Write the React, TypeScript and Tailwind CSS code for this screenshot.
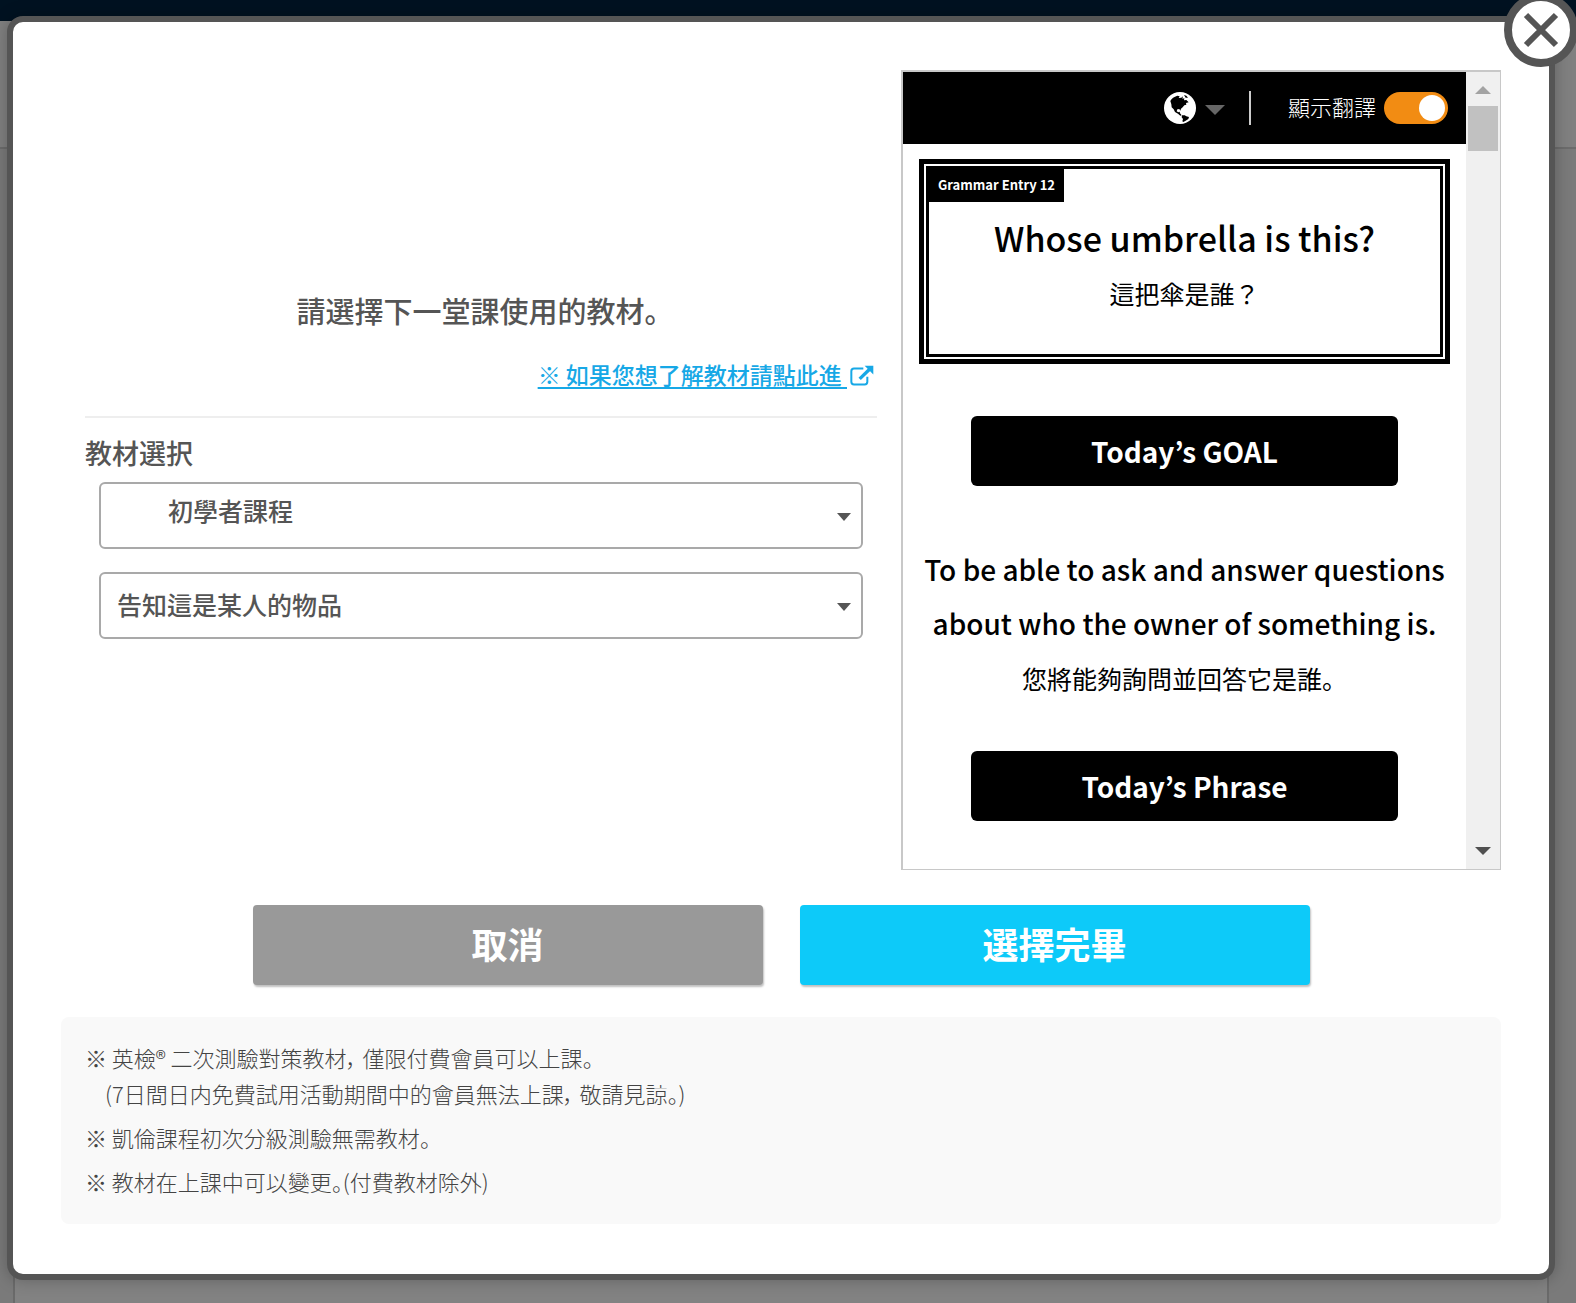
import type { ReactNode } from "react";

const NOTES = [
  ["※ 英檢® 二次測驗對策教材， 僅限付費會員可以上課。", "(7日間日内免費試用活動期間中的會員無法上課， 敬請見諒。)"],
  ["※ 凱倫課程初次分級測驗無需教材。"],
  ["※ 教材在上課中可以變更。(付費教材除外)"],
];

function GlobeIcon() {
  return (
    <svg viewBox="0 0 96 96" className="size-8" aria-hidden="true">
      <circle cx="48" cy="48" r="48" fill="#fff" />
      <path
        d="M19 27C23 19 30 14 40 11L47 13L44 18L52 17L57 13L55 20L61 19L60 25L67 24L74 31L66 33L67 38L61 40L56 46L51 50L49 56L46 51L40 52L38 58L43 61L47 59L48 64L53 70L49 71L42 65L33 60L29 52L23 46L22 37Z"
        fill="#000"
      />
      <path d="M54 70L62 70L67 73L75 75L73 81L65 86L58 90L55 88L57 81L53 76Z" fill="#000" />
      <path d="M60 9L67 11L72 17L65 17Z" fill="#000" />
    </svg>
  );
}

function ExternalIcon() {
  return (
    <svg viewBox="0 0 72 62" className="mt-1 h-[21px] w-6" fill="none" aria-hidden="true">
      <path
        d="M40 10H12Q4 10 4 18V50Q4 58 12 58H44Q52 58 52 50V35"
        stroke="currentColor"
        strokeWidth="6"
      />
      <path d="M29 41L58 13" stroke="currentColor" strokeWidth="10" />
      <path d="M44 2H70V28Z" fill="currentColor" />
    </svg>
  );
}

type TriangleProps = { className: string; up?: boolean };

function Triangle({ className, up = false }: TriangleProps) {
  return (
    <svg viewBox="0 0 16 8" preserveAspectRatio="none" className={className} aria-hidden="true">
      <path d={up ? "M0 8H16L8 0Z" : "M0 0H16L8 8Z"} fill="currentColor" />
    </svg>
  );
}

type SelectBoxProps = { label: string; value: string; className: string };

function SelectBox({ label, value, className }: SelectBoxProps) {
  return (
    <div className="relative">
      <select
        aria-label={label}
        className={`block h-[67px] w-full appearance-none rounded-md border-2 border-[#a9a9a9] bg-white text-[25px] font-medium text-[#555] ${className}`}
      >
        <option>{value}</option>
      </select>
      <Triangle className="pointer-events-none absolute top-[31px] right-3 h-2 w-[14px] text-[#555]" />
    </div>
  );
}

function Banner({ children }: { children: ReactNode }) {
  return (
    <h3 className="mx-auto flex h-[70px] w-[76%] items-center justify-center rounded-md bg-black text-[28px] font-bold text-white">
      {children}
    </h3>
  );
}

function Preview() {
  return (
    <section className="flex h-[800px] w-5/12 border border-t-2 border-l-2 border-[#c8c8c8] text-black">
      <div className="flex-1 overflow-hidden">
        <div className="flex h-[72px] items-center justify-end bg-black pr-[18px] text-white">
          <button type="button" aria-label="Language" className="flex items-center gap-[9px]">
            <GlobeIcon />
            <Triangle className="mt-1 h-[10px] w-5 text-[#666]" />
          </button>
          <span className="mr-[37px] ml-6 h-[34px] w-[2px] bg-[#ccc]" />
          <label className="flex items-center gap-2 text-[22px] leading-8 font-light">
            <span className="pb-1">顯示翻譯</span>
            <input type="checkbox" defaultChecked className="peer sr-only" />
            <span className="flex h-8 w-16 items-center justify-end rounded-full bg-[#f28c13] pr-[3px]">
              <span className="size-[26px] rounded-full bg-white" />
            </span>
          </label>
        </div>

        <div className="px-4 pt-[15px] text-center">
          <div className="border-[5px] border-black p-[2px]">
            <div className="relative h-[191px] border-[3px] border-black pt-[42px]">
              <span className="absolute top-0 left-0 bg-black px-[9px] pt-[6px] pb-[7px] text-[13px] leading-5 font-bold text-white">
                Grammar Entry 12
              </span>
              <h2 className="text-[34px] leading-[54px] font-medium">Whose umbrella is this?</h2>
              <p className="text-[25px] leading-[56px]">這把傘是誰？</p>
            </div>
          </div>
        </div>

        <div className="mt-[52px] text-center">
          <Banner>Today’s GOAL</Banner>
          <p className="mt-[56px] text-[28px] leading-[54px] font-medium">
            To be able to ask and answer questions
            <br />
            about who the owner of something is.
          </p>
          <p className="mb-[45px] text-[25px] leading-[56px]">您將能夠詢問並回答它是誰。</p>
          <Banner>Today’s Phrase</Banner>
        </div>
      </div>

      <div className="flex w-[34px] flex-col items-center bg-[#f0f0f0] py-[14px]">
        <Triangle up className="h-2 w-4 text-[#a3a3a3]" />
        <div className="mt-3 h-[45px] w-[30px] bg-[#c1c1c1]" />
        <Triangle className="mt-auto h-2 w-4 text-[#505050]" />
      </div>
    </section>
  );
}

function Backdrop() {
  return (
    <div className="flex flex-col bg-[#7a7a7a] [grid-area:1/1]">
      <div className="h-[21px] bg-[#001221]" />
      <div className="h-[128px] border-b-2 border-[#6c6c6c] bg-[#808080]" />
      <div className="mr-[27px] ml-[13px] flex-1 border-x-2 border-[#6a6a6a] bg-[#828282]" />
    </div>
  );
}

export default function App() {
  return (
    <div className="grid min-h-screen overflow-hidden font-['Noto_Sans_CJK_JP','Noto_Sans_CJK_TC',sans-serif] text-[#555]">
      <Backdrop />
      <div className="z-10 pt-4 pr-[21px] pb-[23px] pl-[7px] [grid-area:1/1]">
        <div
          role="dialog"
          aria-modal="true"
          className="relative rounded-[16px] border-6 border-[#555] bg-white px-12 pt-12 pb-[50px] shadow-[0_0_16px_rgba(0,0,0,0.25)]"
        >
          <button type="button" aria-label="Close" className="absolute -top-7 -right-[29px]">
            <svg viewBox="0 0 74 74" className="size-[74px]" aria-hidden="true">
              <circle cx="37" cy="36" r="33" fill="#fff" stroke="#555" strokeWidth="8" />
              <path d="M22 21L52 51M52 21L22 51" stroke="#555" strokeWidth="6" />
            </svg>
          </button>

          <div className="flex">
            <section className="flex w-7/12 flex-col justify-center px-6 pb-[10px]">
              <h1 className="pl-2 text-center text-[29px] leading-9 font-medium">
                請選擇下一堂課使用的教材。
              </h1>
              <a
                href="#materials"
                className="mt-7 flex items-center justify-end gap-[3px] pr-[3px] text-[23px] leading-9 font-medium text-[#17a8e6]"
              >
                <span className="whitespace-pre underline decoration-2 underline-offset-3">※ 如果您想了解教材請點此進 </span>
                <ExternalIcon />
              </a>
              <hr className="mt-6 border-t-2 border-[#eee]" />
              <h2 className="mt-[17px] text-[27px] leading-9 font-medium">教材選択</h2>
              <div className="mt-[11px] flex flex-col gap-[23px] px-[14px]">
                <SelectBox label="課程" value="初學者課程" className="pb-2 pl-[67px]" />
                <SelectBox label="教材" value="告知這是某人的物品" className="pl-4" />
              </div>
            </section>
            <Preview />
          </div>

          <div className="mt-[35px] flex justify-center gap-[37px] text-[36px] font-bold text-white">
            <button
              type="button"
              className="h-20 w-[510px] rounded-sm bg-[#999] pb-1 shadow-[1px_2px_2px_rgba(0,0,0,0.25)]"
            >
              取消
            </button>
            <button
              type="button"
              className="h-20 w-[510px] rounded-sm bg-[#0dcaf9] pb-1 shadow-[1px_2px_2px_rgba(0,0,0,0.25)]"
            >
              選擇完畢
            </button>
          </div>

          <ul className="mt-8 flex flex-col gap-2 rounded-lg bg-[#f9f9f9] px-6 pt-[22px] pb-[25px] text-[22px] leading-9 font-light text-[#444] [font-feature-settings:'palt']">
            {NOTES.map(([first, second]) => (
              <li key={first}>
                {first}
                {second && <p className="pl-5">{second}</p>}
              </li>
            ))}
          </ul>
        </div>
      </div>
    </div>
  );
}
